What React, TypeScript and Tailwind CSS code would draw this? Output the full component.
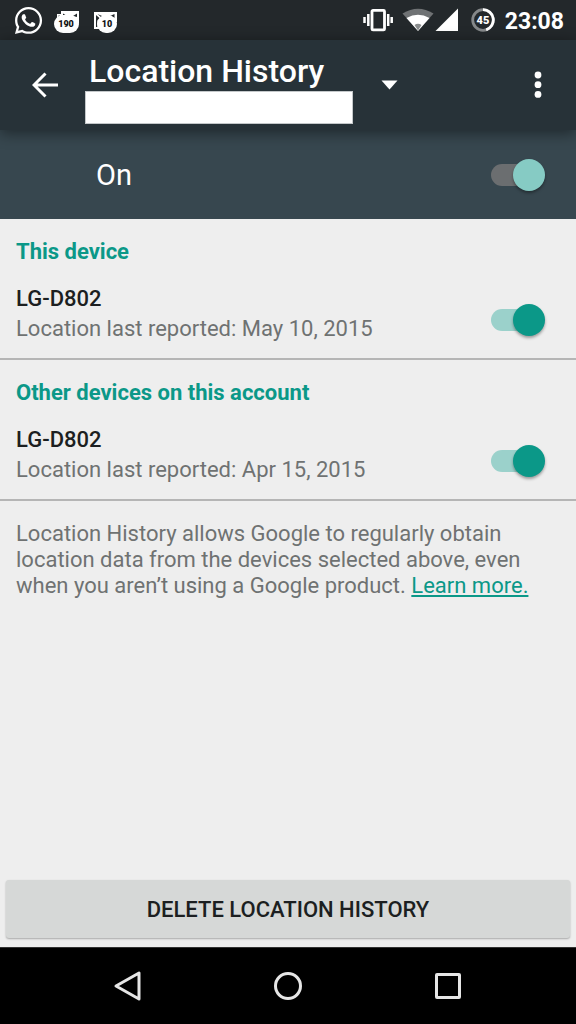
import { useState } from 'react';
import { FaWhatsapp } from 'react-icons/fa';

const devices = [
  { id: 'current', group: 'This device', name: 'LG-D802', reported: 'May 10, 2015' },
  { id: 'other', group: 'Other devices on this account', name: 'LG-D802', reported: 'Apr 15, 2015' },
];

type SwitchProps = {
  label: string;
  checked: boolean;
  onChange: (checked: boolean) => void;
  dark?: boolean;
};

function Switch({ label, checked, onChange, dark = false }: SwitchProps) {
  return (
    <label className="relative flex h-8 w-[54px] shrink-0 cursor-pointer items-center">
      <input
        type="checkbox"
        role="switch"
        aria-label={label}
        checked={checked}
        onChange={e => onChange(e.target.checked)}
        className="peer sr-only"
      />
      <span className={`h-[22px] w-11 rounded-full ${dark ? 'bg-[#6b6e70]' : 'bg-[#9bd1cb]'}`} />
      <span
        className={`absolute left-0 size-8 rounded-full shadow-[0_2px_3px_rgba(0,0,0,0.35)] transition peer-checked:left-[22px] ${
          dark ? 'bg-[#86cbc4]' : 'bg-[#0b9888]'
        }`}
      />
    </label>
  );
}

function StatusBar() {
  return (
    <div className="flex h-10 items-center justify-between bg-[#23282b] pr-3 pl-[13px] text-white">
      <div className="flex items-center">
        <FaWhatsapp size={31} />
        <svg width="26" height="24" viewBox="0 0 26 24" className="mt-1 ml-[10px]">
          <path d="M7 1h18v12H3V4h4Z" fill="#fff" />
          <path d="M9 3.500V6h4ZM23 3.500V7l-4-1ZM4.500 5.500h1.500l-1.500 1.500Z" fill="#23282b" />
          <rect x="0" y="5" width="25" height="18" rx="9" fill="#fff" />
          <text x="12" y="17" textAnchor="middle" fill="#111" fontSize="9" fontWeight="900" fontFamily="Roboto, sans-serif">190</text>
        </svg>
        <svg width="26" height="24" viewBox="0 0 26 24" className="mt-1 ml-[13px]">
          <path d="M1 2h23v10H12v7H1Z" fill="#fff" />
          <path d="M3 5v12h1.500V10L7 8.500ZM21.500 4v4L17 6ZM4.500 4L8 7l1-1Z" fill="#23282b" />
          <rect x="4" y="5" width="20" height="18" rx="9" fill="#fff" />
          <text x="14" y="17" textAnchor="middle" fill="#111" fontSize="9" fontWeight="900" fontFamily="Roboto, sans-serif">10</text>
        </svg>
      </div>
      <div className="flex items-center">
        <svg width="30" height="24" viewBox="0 0 30 24">
          <rect x="9" y="2.400" width="12.500" height="19.500" rx="1" fill="none" stroke="#fff" strokeWidth="2.800" />
          <path d="M1.500 9v6M5.300 6v12M25.200 6v12M28.700 9v6" stroke="#fff" strokeWidth="2.500" />
        </svg>
        <svg width="32" height="24" viewBox="0 0 32 24" className="ml-[9px]">
          <path d="M0.500 5.500Q16-4 31.500 5.500L16 23Z" fill="#6f7274" />
          <path d="M4.500 10Q16 3.500 27.500 10L16 23Z" fill="#fff" />
          <path d="M12.500 17Q16 14.500 19.500 17L16 22.500Z" fill="#8a8d8e" />
        </svg>
        <svg width="24" height="24" viewBox="0 0 24 24" className="ml-px">
          <path d="M23 0.500V23H0.500Z" fill="#fff" />
        </svg>
        <svg width="24" height="24" viewBox="0 0 24 24" className="ml-3">
          <circle cx="12" cy="12" r="10.300" fill="none" stroke="#85888a" strokeWidth="2.800" />
          <path d="M12 1.700A10.300 10.300 0 0 1 15.200 21.800" fill="none" stroke="#fff" strokeWidth="2.800" />
          <text x="12" y="16" textAnchor="middle" fill="#fff" fontSize="11" fontWeight="900" fontFamily="Roboto, sans-serif">45</text>
        </svg>
        <span className="ml-[10px] pt-[3px] text-[23px] leading-6 font-bold">23:08</span>
      </div>
    </div>
  );
}

function Header() {
  return (
    <header className="relative z-10 flex h-[90px] items-center bg-[#273238] text-white shadow-[0_3px_14px_rgba(0,0,0,0.45)]">
      <button type="button" aria-label="Back" className="ml-8">
        <svg width="26" height="26" viewBox="0 0 26 26">
          <path d="M26 13H2M13.500 1.500L2 13l11.500 11.500" fill="none" stroke="#fff" strokeWidth="3" />
        </svg>
      </button>
      <div className="ml-[27px] w-[268px] self-start pt-3">
        <h1 className="pl-1 text-[32px] leading-[39px] font-medium whitespace-nowrap">Location History</h1>
        <div className="h-[33px] border border-[#c4c8ca] bg-white" />
      </div>
      <button type="button" aria-label="Choose account" className="ml-7">
        <svg width="17" height="10" viewBox="0 0 17 10">
          <path d="M0.500 0.500h16L8.500 9.500Z" fill="#fff" />
        </svg>
      </button>
      <button type="button" aria-label="More options" className="mr-[34px] ml-auto">
        <svg width="8" height="28" viewBox="0 0 8 28" fill="#fff">
          <circle cx="4" cy="4" r="3.400" />
          <circle cx="4" cy="13.700" r="3.400" />
          <circle cx="4" cy="23.400" r="3.400" />
        </svg>
      </button>
    </header>
  );
}

function NavBar() {
  return (
    <nav className="flex h-[77px] items-center justify-center gap-32 border-t border-[#333] bg-black">
      <button type="button" aria-label="Back">
        <svg width="32" height="32" viewBox="0 0 32 32">
          <path d="M27 3v26L4 16Z" fill="none" stroke="#e6e6e6" strokeWidth="3" strokeLinejoin="round" />
        </svg>
      </button>
      <button type="button" aria-label="Home">
        <svg width="32" height="32" viewBox="0 0 32 32">
          <circle cx="16" cy="16" r="12.500" fill="none" stroke="#e6e6e6" strokeWidth="3" />
        </svg>
      </button>
      <button type="button" aria-label="Recent apps">
        <svg width="32" height="32" viewBox="0 0 32 32">
          <rect x="4.500" y="4.500" width="23" height="23" rx="0.500" fill="none" stroke="#e6e6e6" strokeWidth="3" strokeLinejoin="round" />
        </svg>
      </button>
    </nav>
  );
}

export default function App() {
  const [historyOn, setHistoryOn] = useState(true);
  const [enabled, setEnabled] = useState<Record<string, boolean>>({ current: true, other: true });

  return (
    <div className="flex min-h-screen flex-col bg-[#eeeeee] font-[Roboto,sans-serif] text-[22px] leading-[26px] text-[#6f7272]">
      <StatusBar />
      <Header />

      <div className="flex h-[89px] items-center justify-between bg-[#37474f] pr-[31px] pl-24 text-[29px] text-white">
        <span>{historyOn ? 'On' : 'Off'}</span>
        <Switch label="Location History" checked={historyOn} onChange={setHistoryOn} dark />
      </div>

      <main className="flex flex-1 flex-col">
        {devices.map(device => (
          <section key={device.id} className="border-b-2 border-[#b5b5b5] pt-5 pr-[31px] pb-4 pl-4">
            <h2 className="font-bold text-[#0b9888]">{device.group}</h2>
            <div className="mt-[21px] flex items-end justify-between">
              <div className="flex flex-col gap-1">
                <h3 className="font-medium text-[#1c1f21]">{device.name}</h3>
                <p>Location last reported: {device.reported}</p>
              </div>
              <div className="pb-[6px]">
                <Switch
                  label={`${device.name}, ${device.reported}`}
                  checked={enabled[device.id]}
                  onChange={checked => setEnabled(prev => ({ ...prev, [device.id]: checked }))}
                />
              </div>
            </div>
          </section>
        ))}

        <p className="px-4 pt-5">
          Location History allows Google to regularly obtain location data from the devices selected above, even when
          you aren’t using a Google product.{' '}
          <a href="#learn-more" className="text-[#0b9888] underline">
            Learn more.
          </a>
        </p>

        <button
          type="button"
          className="mx-[6px] mt-auto mb-[9px] h-[58px] rounded-[3px] bg-[#d6d8d7] pt-[2px] font-medium text-[#1c1f21] shadow-[0_1px_2px_rgba(0,0,0,0.3)]"
        >
          DELETE LOCATION HISTORY
        </button>
      </main>

      <NavBar />
    </div>
  );
}
